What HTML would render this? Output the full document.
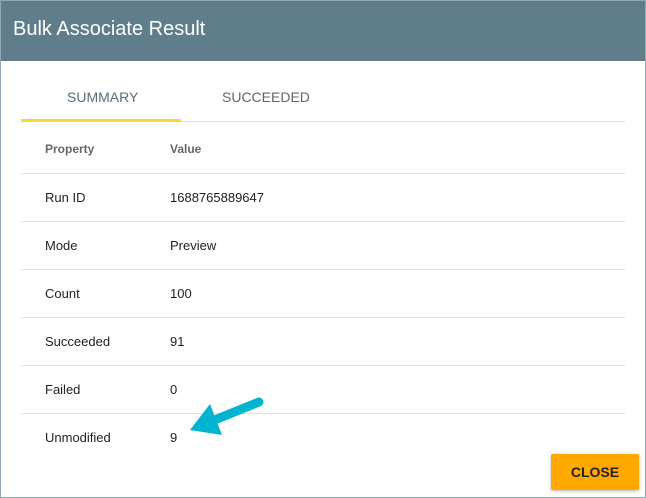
<!DOCTYPE html>
<html><head><style>
body{margin:0;width:646px;height:498px;overflow:hidden;font-family:"Liberation Sans",sans-serif;background:#fff;position:relative}
.frame{position:absolute;left:0;top:0;width:644px;height:496px;border:1px solid #8fa6b3;}
.hdr{position:absolute;left:0;top:0;width:646px;height:61px;background:#607d8b;color:#fff;font-size:20px;line-height:58px;padding-left:13px;box-sizing:border-box}
.tab{position:absolute;top:89px;font-size:14px;color:#546e7a}
.t2{color:#666}
.ul{position:absolute;left:21px;top:119px;width:160px;height:3px;background:#fdd835}
.gl{position:absolute;left:21px;top:121px;width:604px;height:1px;background:#e0e0e0}
.row{position:absolute;left:21px;width:604px;height:47px;border-bottom:1px solid #e0e0e0;font-size:13px;color:#222}
.row span{position:absolute;top:16px}
.row .a{left:24px}.row .b{left:149px}
.row.h{color:#666;font-weight:bold;font-size:12px}
.btn{position:absolute;left:551px;top:454px;width:88px;height:36px;background:#ffa800;border-radius:2px;box-shadow:0 1px 3px rgba(0,0,0,.3);font-size:14px;font-weight:bold;text-align:center;line-height:36px;color:#222}
</style></head><body>
<div class="hdr">Bulk Associate Result</div>
<div class="tab" style="left:67px">SUMMARY</div>
<div class="tab t2" style="left:222px">SUCCEEDED</div>
<div class="gl"></div><div class="ul"></div>
<div class="row h" style="top:126px"><span class="a">Property</span><span class="b">Value</span></div>
<div class="row" style="top:174px"><span class="a">Run ID</span><span class="b">1688765889647</span></div>
<div class="row" style="top:222px"><span class="a">Mode</span><span class="b">Preview</span></div>
<div class="row" style="top:270px"><span class="a">Count</span><span class="b">100</span></div>
<div class="row" style="top:318px"><span class="a">Succeeded</span><span class="b">91</span></div>
<div class="row" style="top:366px"><span class="a">Failed</span><span class="b">0</span></div>
<div class="row" style="top:414px;border-bottom:none"><span class="a">Unmodified</span><span class="b">9</span></div>
<div class="btn">CLOSE</div>
<div class="frame"></div>
<svg style="position:absolute;left:0;top:0" width="646" height="498">
<line x1="259" y1="402" x2="212" y2="421" stroke="#00b4d0" stroke-width="9" stroke-linecap="round"/>
<polygon points="190,430 210,404 222,435" fill="#00b4d0"/>
</svg>
</body></html>
